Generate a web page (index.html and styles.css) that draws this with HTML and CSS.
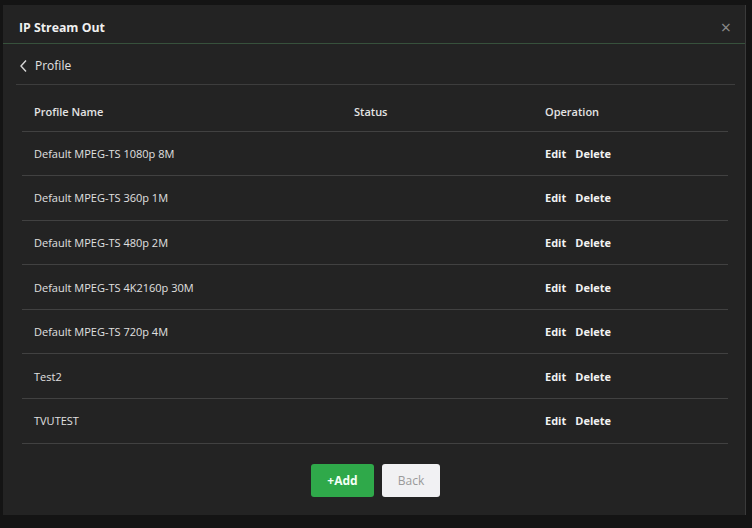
FILE: index.html
```html
<!DOCTYPE html>
<html lang="en">
<head>
    <meta charset="UTF-8">
    <meta name="viewport" content="width=device-width, initial-scale=1.0">
    <title>IP Stream Out</title>
    <link rel="stylesheet" href="styles.css">
</head>
<body>
    <div class="modal">
        <header class="modal-header">
            <h1>IP Stream Out</h1>
            <span class="close">&times;</span>
        </header>

        <div class="modal-body">
            <div class="crumb">
                <svg class="chevron" width="10" height="14" viewBox="0 0 10 14">
                    <path d="M7 1.5 L2 7 L7 12.5" fill="none" stroke="#d6d6d6" stroke-width="1.4"/>
                </svg>
                <span>Profile</span>
            </div>

            <table class="profiles">
                <thead>
                    <tr>
                        <th class="col-name">Profile Name</th>
                        <th class="col-status">Status</th>
                        <th class="col-op">Operation</th>
                    </tr>
                </thead>
                <tbody>
                    <tr>
                        <td>Default MPEG-TS 1080p 8M</td>
                        <td></td>
                        <td class="ops"><a href="#">Edit</a><a href="#">Delete</a></td>
                    </tr>
                    <tr>
                        <td>Default MPEG-TS 360p 1M</td>
                        <td></td>
                        <td class="ops"><a href="#">Edit</a><a href="#">Delete</a></td>
                    </tr>
                    <tr>
                        <td>Default MPEG-TS 480p 2M</td>
                        <td></td>
                        <td class="ops"><a href="#">Edit</a><a href="#">Delete</a></td>
                    </tr>
                    <tr>
                        <td>Default MPEG-TS 4K2160p 30M</td>
                        <td></td>
                        <td class="ops"><a href="#">Edit</a><a href="#">Delete</a></td>
                    </tr>
                    <tr>
                        <td>Default MPEG-TS 720p 4M</td>
                        <td></td>
                        <td class="ops"><a href="#">Edit</a><a href="#">Delete</a></td>
                    </tr>
                    <tr>
                        <td>Test2</td>
                        <td></td>
                        <td class="ops"><a href="#">Edit</a><a href="#">Delete</a></td>
                    </tr>
                    <tr>
                        <td>TVUTEST</td>
                        <td></td>
                        <td class="ops"><a href="#">Edit</a><a href="#">Delete</a></td>
                    </tr>
                </tbody>
            </table>

            <div class="modal-footer">
                <button class="add">+Add</button>
                <button class="back">Back</button>
            </div>
        </div>
    </div>
</body>
</html>
```

FILE: styles.css
```css
body {
    margin: 0;
    height: 528px;
    overflow: hidden;
    background-color: #141414;
    font-family: 'Open Sans', 'Noto Sans', sans-serif;
    color: #e6e6e6;
}

.modal {
    margin: 5px 6px 0 3px;
    height: 510px;
    background-color: #232323;
    border-right: 1px solid #3a3a3a;
    box-sizing: border-box;
}

.modal-header {
    height: 39px;
    display: flex;
    align-items: center;
    justify-content: space-between;
    padding: 6px 14px 0 16px;
    box-sizing: border-box;
    border-bottom: 1px solid #37513c;
}

.modal-header h1 {
    margin: 0;
    font-size: 12.3px;
    font-weight: bold;
    color: #f0f0f0;
}

.close {
    color: #8a8a8a;
    font-size: 18px;
    line-height: 1;
}

.modal-body {
    padding: 0 10px 0 13px;
}

.crumb {
    height: 41px;
    display: flex;
    align-items: center;
    gap: 6px;
    padding: 3px 0 0 2px;
    box-sizing: border-box;
    border-bottom: 1px solid #3d3d3d;
    font-size: 12px;
    color: #e2e2e2;
}

.chevron {
    margin-left: 1px;
}

.profiles {
    width: 706px;
    margin: 0 0 0 6px;
    border-collapse: collapse;
    font-size: 11px;
}

.profiles th,
.profiles td {
    height: 44.6px;
    padding: 0 12px;
    text-align: left;
    border-bottom: 1px solid #414141;
    box-sizing: border-box;
}

.profiles th {
    font-weight: 600;
    color: #e4e4e4;
    height: 46px;
    padding-top: 7px;
}

.profiles td {
    color: #e0e0e0;
}

.col-name { width: 320px; }
.col-status { width: 191px; }

.ops a {
    color: #f2f2f2;
    font-weight: bold;
    text-decoration: none;
    margin-right: 9px;
}

.modal-footer {
    display: flex;
    justify-content: center;
    gap: 8px;
    padding-top: 20px;
}

.modal-footer button {
    height: 33px;
    border: none;
    border-radius: 3px;
    font-family: inherit;
    font-size: 12px;
    cursor: pointer;
}

.modal-footer .add {
    width: 63px;
    background-color: #2fa94a;
    color: #f4fff6;
    font-weight: bold;
}

.modal-footer .back {
    width: 58px;
    background-color: #f1f1f3;
    color: #9a9a9a;
}
```
